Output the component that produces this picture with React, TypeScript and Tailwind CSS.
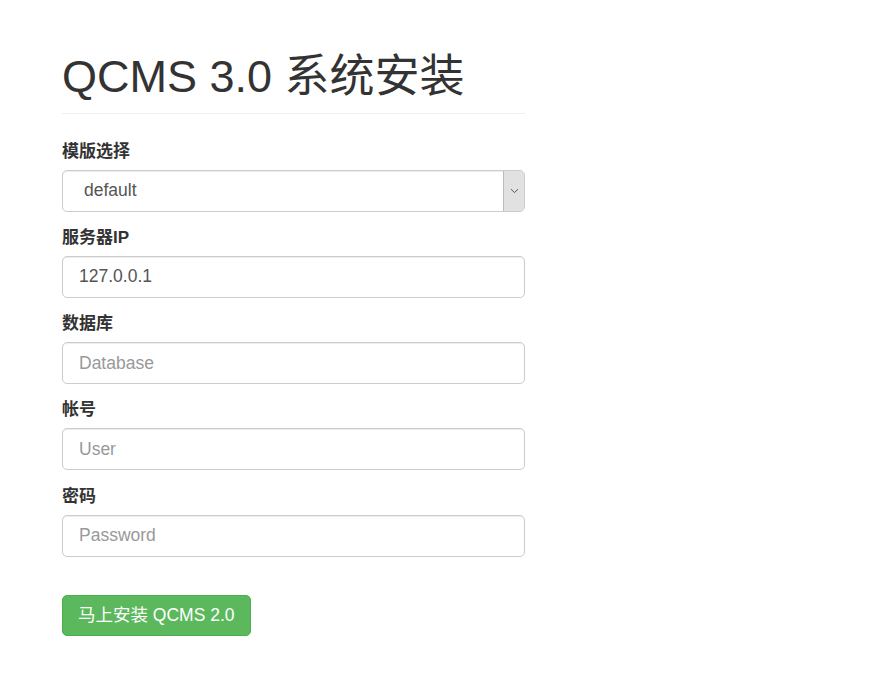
import React from "react";

const fields = [
  { label: "服务器IP", value: "127.0.0.1", placeholder: "" },
  { label: "数据库", value: "", placeholder: "Database" },
  { label: "帐号", value: "", placeholder: "User" },
  { label: "密码", value: "", placeholder: "Password", type: "password" },
];

const inputClass =
  "block h-[42px] w-full rounded-[5px] border border-[#ccc] bg-white px-[16px] text-[17.5px] text-[#555] shadow-[inset_0_1px_1px_rgba(0,0,0,0.075)] outline-none placeholder:text-[#999]";

export default function App() {
  return (
    <div className="min-h-screen bg-white font-['Liberation_Sans','Noto_Sans_CJK_SC',sans-serif] text-[17px] text-[#333]">
      <div className="w-[463px] ml-[62px] pt-[52px]">
        <div className="border-b border-[#eee] pb-[11px]">
          <h1 className="text-[45px] font-normal leading-[1.1] text-[#333]">QCMS 3.0 系统安装</h1>
        </div>

        <form className="mt-[26px]">
          <div className="mb-[14.25px]">
            <label className="mb-[6px] block text-[17px] font-bold leading-[24px]">模版选择</label>
            <div className="relative">
              <select className={inputClass + " appearance-none pl-[21px]"} defaultValue="default">
                <option value="default">default</option>
              </select>
              <span className="pointer-events-none absolute top-px right-px bottom-px flex w-[21px] items-center justify-center rounded-r-[4px] border-l border-[#bcbcbc] bg-[#e1e1e1]">
                <svg width="9" height="6" viewBox="0 0 9 6" fill="none">
                  <path d="M1 1.2 4.5 4.6 8 1.2" stroke="#555" strokeWidth="1" />
                </svg>
              </span>
            </div>
          </div>

          {fields.map((f) => (
            <div key={f.label} className="mb-[14.25px]">
              <label className="mb-[6px] block text-[17px] font-bold leading-[24px]">{f.label}</label>
              <input
                type={f.type || "text"}
                defaultValue={f.value}
                placeholder={f.placeholder}
                className={inputClass}
              />
            </div>
          ))}

          <button
            type="button"
            className="mt-[24px] h-[41px] rounded-[5px] border border-[#4cae4c] bg-[#5cb85c] px-[15px] text-[17.5px] leading-[24px] text-white"
          >
            马上安装 QCMS 2.0
          </button>
        </form>
      </div>
    </div>
  );
}
